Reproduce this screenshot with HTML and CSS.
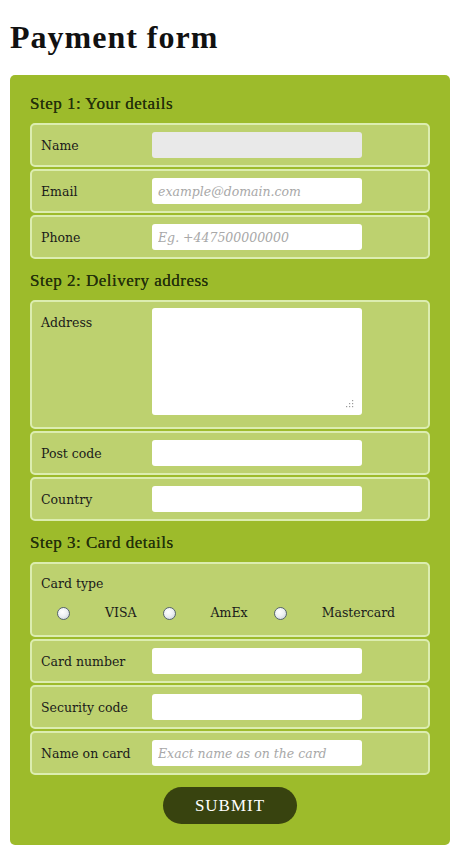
FILE: index.html
```html
<!DOCTYPE html>
<html lang="en">
<head>
<meta charset="utf-8">
<title>Payment form</title>
<link rel="stylesheet" href="styles.css">
</head>
<body>
<h1 class="title">Payment form</h1>
<form class="panel">
  <h2 class="step">Step 1: Your details</h2>
  <div class="rows">
    <div class="row"><label class="lbl">Name</label><input class="field field-grey" type="text"></div>
    <div class="row"><label class="lbl">Email</label><input class="field" type="text" placeholder="example@domain.com"></div>
    <div class="row"><label class="lbl">Phone</label><input class="field" type="text" placeholder="Eg. +447500000000"></div>
  </div>
  <h2 class="step">Step 2: Delivery address</h2>
  <div class="rows">
    <div class="row row-top"><label class="lbl">Address</label>
      <div class="area-wrap"><textarea class="area"></textarea>
        <svg class="grip" width="9" height="9" viewBox="0 0 9 9" aria-hidden="true">
          <rect x="7" y="1" width="1.2" height="1.2" fill="#9a9a9a"/>
          <rect x="4" y="4" width="1.2" height="1.2" fill="#9a9a9a"/>
          <rect x="7" y="4" width="1.2" height="1.2" fill="#9a9a9a"/>
          <rect x="1" y="7" width="1.2" height="1.2" fill="#9a9a9a"/>
          <rect x="4" y="7" width="1.2" height="1.2" fill="#9a9a9a"/>
          <rect x="7" y="7" width="1.2" height="1.2" fill="#9a9a9a"/>
        </svg>
      </div>
    </div>
    <div class="row"><label class="lbl">Post code</label><input class="field" type="text"></div>
    <div class="row"><label class="lbl">Country</label><input class="field" type="text"></div>
  </div>
  <h2 class="step">Step 3: Card details</h2>
  <div class="rows">
    <div class="row row-card">
      <div class="lbl">Card type</div>
      <div class="radios">
        <input class="radio" type="radio" name="ct"><span class="rlabel">VISA</span>
        <input class="radio" type="radio" name="ct"><span class="rlabel">AmEx</span>
        <input class="radio" type="radio" name="ct"><span class="rlabel">Mastercard</span>
      </div>
    </div>
    <div class="row"><label class="lbl">Card number</label><input class="field" type="text"></div>
    <div class="row"><label class="lbl">Security code</label><input class="field" type="text"></div>
    <div class="row"><label class="lbl">Name on card</label><input class="field" type="text" placeholder="Exact name as on the card"></div>
  </div>
  <div class="actions"><button class="submit" type="button">SUBMIT</button></div>
</form>
</body>
</html>
```
FILE: styles.css
```css
html, body { margin: 0; padding: 0; background: #ffffff; }
body { padding: 19px 10px 0 10px; width: 440px; }
.title {
  margin: 0;
  font-family: "Liberation Serif", serif;
  font-weight: bold;
  font-size: 32px;
  line-height: 36px;
  letter-spacing: 1px;
  color: #111111;
}
.panel {
  margin-top: 20px;
  background: #9dbb2b;
  border-radius: 5px;
  padding: 7px 20px 21px 20px;
}
.step {
  margin: 12px 0 9px 0;
  font-family: "Liberation Serif", serif;
  font-weight: normal;
  font-size: 17px;
  line-height: 20px;
  letter-spacing: 0.5px;
  color: #24310a;
  text-shadow: 0 0 0.15px #24310a;
}
.rows { display: flex; flex-direction: column; gap: 2px; }
.row {
  display: flex;
  align-items: center;
  height: 40px;
  border: 2px solid #dcedb0;
  border-radius: 5px;
  background: #bdd16f;
  padding: 0 0 0 9px;
}
.row-top { align-items: flex-start; height: auto; padding-top: 6px; padding-bottom: 12px; }
.row-top .lbl { margin-top: 4px; }
.row-card { display: block; height: auto; padding-top: 9px; padding-bottom: 12px; }
.lbl {
  width: 111px;
  flex: none;
  padding-top: 1px;
  font-family: "DejaVu Serif", serif;
  font-size: 12.5px;
  line-height: 20px;
  color: #1a1a1a;
}
.field, .area {
  width: 210px;
  height: 26px;
  box-sizing: border-box;
  border: none;
  border-radius: 3px;
  background: #ffffff;
  padding: 0 6px;
  font-family: "DejaVu Serif", serif;
  font-size: 12.5px;
  color: #333;
  outline: none;
}
.field-grey { background: #e9e9e9; }
.field::placeholder { font-style: italic; color: #a8a8a8; }
.area-wrap { position: relative; width: 210px; }
.area { display: block; height: 107px; resize: none; padding: 4px 6px; }
.grip { position: absolute; right: 8px; bottom: 7px; }
.radios {
  display: flex;
  align-items: center;
  margin-top: 9px;
  padding-left: 16px;
  height: 20px;
}
.radio {
  appearance: none;
  -webkit-appearance: none;
  width: 13px;
  height: 13px;
  margin: 0 35px 0 0;
  border: 1px solid #56646f;
  border-radius: 50%;
  background: radial-gradient(circle at 40% 35%, #ffffff 0%, #eef1f4 45%, #c3cbd4 100%);
  box-sizing: border-box;
  flex: none;
}
.rlabel {
  font-family: "DejaVu Serif", serif;
  font-size: 12.5px;
  line-height: 20px;
  color: #1a1a1a;
  margin-right: 26px;
}
.actions { display: flex; justify-content: center; margin-top: 12px; }
.submit {
  width: 134px;
  height: 37px;
  border: none;
  border-radius: 19px;
  background: #38430f;
  color: #ffffff;
  font-family: "Liberation Serif", serif;
  font-size: 17px;
  letter-spacing: 1px;
  padding: 0;
}
```
